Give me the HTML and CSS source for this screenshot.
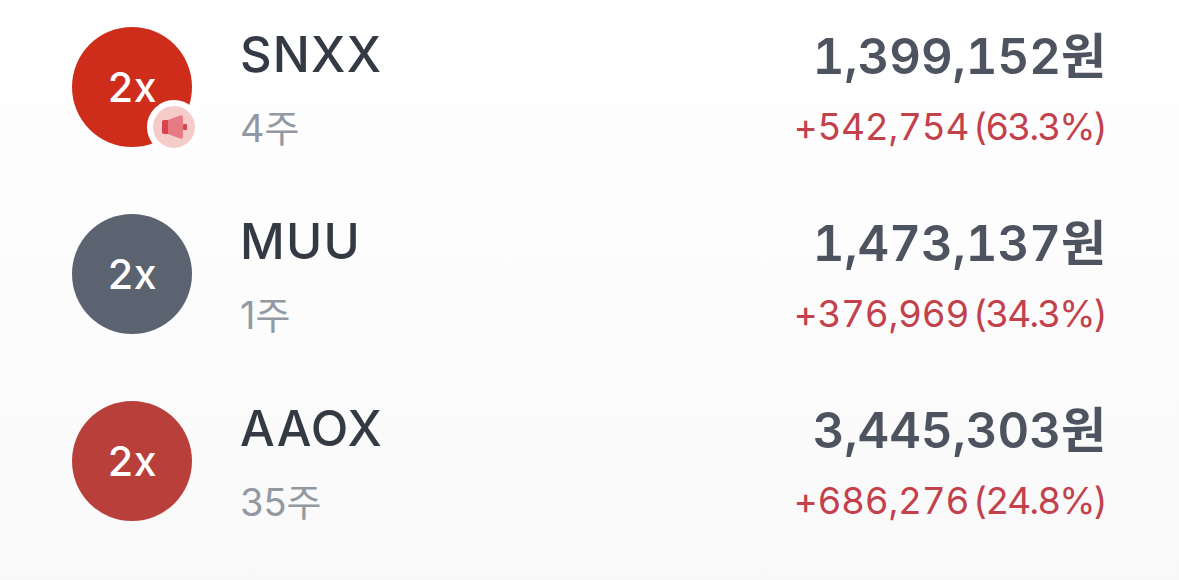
FILE: index.html
```html
<!DOCTYPE html>
<html lang="ko">
<head>
    <meta charset="UTF-8">
    <meta name="viewport" content="width=device-width, initial-scale=1.0">
    <title>보유 종목</title>
    <link rel="stylesheet" href="styles.css">
</head>
<body>
    <ul class="stock-list">
        <li class="stock-row">
            <div class="stock-icon icon-red">2x
                <span class="notice-badge">
                    <svg width="28" height="24" viewBox="0 0 28 24">
                        <path class="horn-back" d="M2 7q0-2 2-2h4v14H4q-2 0-2-2z"/>
                        <path class="horn-body" d="M8 5L20 .5q3-1 3 2v19q0 3-3 2L8 19z"/>
                        <rect class="horn-back" x="23" y="9" width="4" height="6" rx="1"/>
                    </svg>
                </span>
            </div>
            <div class="stock-info">
                <p class="stock-name">SNXX</p>
                <p class="stock-qty">4주</p>
            </div>
            <div class="stock-value">
                <p class="stock-price">1,399,152원</p>
                <p class="stock-gain">+542,754 <span class="gain-rate">(63.3%)</span></p>
            </div>
        </li>
        <li class="stock-row">
            <div class="stock-icon icon-slate">2x</div>
            <div class="stock-info">
                <p class="stock-name">MUU</p>
                <p class="stock-qty">1주</p>
            </div>
            <div class="stock-value">
                <p class="stock-price">1,473,137원</p>
                <p class="stock-gain">+376,969 <span class="gain-rate">(34.3%)</span></p>
            </div>
        </li>
        <li class="stock-row">
            <div class="stock-icon icon-brick">2x</div>
            <div class="stock-info">
                <p class="stock-name">AAOX</p>
                <p class="stock-qty">35주</p>
            </div>
            <div class="stock-value">
                <p class="stock-price">3,445,303원</p>
                <p class="stock-gain">+686,276 <span class="gain-rate">(24.8%)</span></p>
            </div>
        </li>
    </ul>
</body>
</html>
```

FILE: styles.css
```css
html, body {
    margin: 0;
    height: 100%;
}
body {
    font-family: Inter, "Noto Sans CJK KR", sans-serif;
    font-variant-numeric: tabular-nums;
    background: linear-gradient(#ffffff, #f9f9fa);
    overflow: hidden;
}
p {
    margin: 0;
}
.stock-list {
    list-style: none;
    margin: 0;
    padding: 27px 73px 0 72px;
    display: flex;
    flex-direction: column;
    gap: 67px;
}
.stock-row {
    display: flex;
    align-items: center;
    height: 120px;
}
.stock-icon {
    position: relative;
    flex: none;
    width: 120px;
    height: 120px;
    border-radius: 50%;
    display: flex;
    align-items: center;
    justify-content: center;
    color: #fff;
    font-size: 41px;
    font-weight: 500;
}
.icon-red { background: #cf2d1c; }
.icon-slate { background: #5b6370; }
.icon-brick { background: #b9403a; }
.notice-badge {
    position: absolute;
    right: -9px;
    bottom: -7px;
    width: 42px;
    height: 42px;
    border-radius: 50%;
    border: 6px solid #fff;
    background: #f6cccb;
    display: flex;
    align-items: center;
    justify-content: center;
}
.horn-back { fill: #d9444c; }
.horn-body { fill: #e77a82; }
.stock-info {
    flex: 1;
    margin-left: 48px;
    padding-top: 3px;
}
.stock-name {
    color: #333a44;
    font-size: 49px;
    font-weight: 500;
    letter-spacing: 1.2px;
    line-height: 58px;
}
.stock-qty {
    margin-top: 21px;
    color: #9299a3;
    font-size: 38px;
    font-variant-numeric: proportional-nums;
    line-height: 46px;
}
.stock-value {
    text-align: right;
    padding-top: 3px;
}
.stock-price {
    color: #4e5360;
    font-size: 49px;
    font-weight: 600;
    line-height: 58px;
}
.stock-gain {
    margin-top: 18px;
    color: #c2414b;
    font-size: 37px;
    line-height: 46px;
    letter-spacing: -0.3px;
    word-spacing: -6px;
}
.gain-rate {
    letter-spacing: -2px;
}
```
